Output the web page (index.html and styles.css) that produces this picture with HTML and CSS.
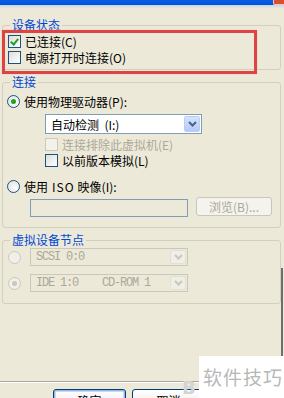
FILE: index.html
```html
<!DOCTYPE html>
<html lang="zh-CN">
<head>
    <meta charset="UTF-8">
    <meta name="viewport" content="width=device-width, initial-scale=1.0">
    <title>CD/DVD 设置</title>
    <link rel="stylesheet" href="styles.css">
</head>
<body>
    <div class="window">
        <div class="titlebar"><span class="close-btn"></span></div>

        <div class="content">
            <fieldset class="group group-status">
                <legend>设备状态</legend>
                <div class="row"><span class="check checked"></span>已连接(C)</div>
                <div class="row"><span class="check"></span>电源打开时连接(O)</div>
            </fieldset>

            <fieldset class="group group-conn">
                <legend>连接</legend>
                <div class="row"><span class="radio checked"></span>使用物理驱动器(P):</div>
                <div class="indent">
                    <div class="combo">
                        <span class="combo-text">自动检测&nbsp;&nbsp;(I:)</span>
                        <span class="combo-btn">
                            <svg width="9" height="6" viewBox="0 0 9 6"><path d="M1 1 L4.5 4.5 L8 1" fill="none" stroke="#4D6185" stroke-width="2"/></svg>
                        </span>
                    </div>
                    <div class="row row-e disabled"><span class="check"></span>连接排除此虚拟机(E)</div>
                    <div class="row"><span class="check"></span>以前版本模拟(L)</div>
                </div>
                <div class="row row-iso"><span class="radio"></span>使用<span class="lat">ISO</span>映像(I):</div>
                <div class="iso-line">
                    <div class="text-input"></div>
                    <div class="btn btn-disabled">浏览(B)...</div>
                </div>
            </fieldset>

            <fieldset class="group group-node">
                <legend>虚拟设备节点</legend>
                <div class="node-row">
                    <span class="radio disabled-radio"></span>
                    <div class="combo combo-disabled">
                        <span class="combo-text mono">SCSI 0:0</span>
                        <span class="combo-btn">
                            <svg width="9" height="6" viewBox="0 0 9 6"><path d="M1 1 L4.5 4.5 L8 1" fill="none" stroke="#C9C7BA" stroke-width="2"/></svg>
                        </span>
                    </div>
                </div>
                <div class="node-row">
                    <span class="radio disabled-radio checked"></span>
                    <div class="combo combo-disabled">
                        <span class="combo-text mono">IDE 1:0    CD-ROM 1</span>
                        <span class="combo-btn">
                            <svg width="9" height="6" viewBox="0 0 9 6"><path d="M1 1 L4.5 4.5 L8 1" fill="none" stroke="#C9C7BA" stroke-width="2"/></svg>
                        </span>
                    </div>
                </div>
            </fieldset>
        </div>

        <div class="footer">
            <div class="btn btn-default">确定</div>
            <div class="btn">取消</div>
        </div>

        <!-- annotation + watermark sit on top of the dialog -->
        <div class="highlight"></div>
        <div class="edge-line"></div>
        <div class="watermark"><span class="wm-logo">B</span><span class="wm-text">软件技巧</span></div>
    </div>
</body>
</html>
```

FILE: styles.css
```css
:root { --bg: #ECE9D8; --line: #D0D0BF; --legend: #0046D5; --disabled: #ACA899; --edge: #7F9DB9; }

* {
    box-sizing: border-box;
    margin: 0;
    padding: 0;
}

body {
    width: 284px;
    height: 398px;
    overflow: hidden;
    background: var(--bg);
    color: #000;
    font-family: "Noto Sans CJK SC", "DejaVu Sans", sans-serif;
    font-size: 12px;
    line-height: 15px;
}

.window {
    position: relative;
    height: 398px;
    display: flex;
    flex-direction: column;
}

.titlebar {
    height: 8px;
    background: linear-gradient(to bottom, #0A5FE6 0, #0550D8 5px, #C9D4EC 5px, #E8E6DA 8px);
    display: flex;
    justify-content: flex-end;
}

.close-btn {
    width: 11px;
    height: 5px;
    background: #D9502E;
    border-left: 1px solid #F3C8B8;
    border-bottom: 1px solid #F3C8B8;
    border-bottom-left-radius: 2px;
}

.content {
    padding: 0 3px 0 2px;
}

.group {
    border: 1px solid var(--line);
    border-radius: 3px;
    padding: 0 4px 0 4px;
}

.group legend {
    color: var(--legend);
    margin-left: 3px;
    padding: 0 2px;
    line-height: 14px;
}

.group-status {
    margin-top: 10px;
    padding-top: 1px;
    padding-bottom: 4px;
}

.group-status .row {
    padding-left: 1px;
}

.group-conn {
    margin-top: 5px;
    padding-top: 4px;
    padding-bottom: 10px;
}

.group-node {
    margin-top: 5px;
    padding-top: 1px;
    padding-bottom: 11px;
}

.row {
    display: flex;
    align-items: center;
    height: 16px;
    gap: 4px;
    white-space: nowrap;
}

.lat {
    margin-right: -1px;
    letter-spacing: 1px;
}

.disabled {
    color: var(--disabled);
}

.indent {
    margin-left: 38px;
}

.row-e {
    margin-top: 2px;
}

.row-iso {
    margin-top: 10px;
}

/* checkbox + radio, XP look */
.check {
    width: 13px;
    height: 13px;
    flex: none;
    border: 1px solid #1C5180;
    background: linear-gradient(135deg, #DCDCD7, #FFFFFF);
    position: relative;
}

.disabled .check {
    border-color: #CAC8BB;
    background: #F2F1EA;
}

.check.checked::after {
    content: "";
    position: absolute;
    left: 3px;
    top: 1px;
    width: 3px;
    height: 6px;
    border: solid #21A121;
    border-width: 0 2px 2px 0;
    transform: rotate(40deg);
}

.radio {
    width: 13px;
    height: 13px;
    flex: none;
    border-radius: 50%;
    border: 1px solid #1C5180;
    background: radial-gradient(circle at 65% 65%, #FFFFFF, #DCDCD7);
    position: relative;
}

.radio.checked::after {
    content: "";
    position: absolute;
    left: 3px;
    top: 3px;
    width: 5px;
    height: 5px;
    border-radius: 50%;
    background: #21A121;
}

.radio.disabled-radio {
    border-color: #CAC8BB;
    background: #F0EFE8;
}

.radio.disabled-radio.checked::after {
    background: #CAC8BB;
}

/* combo boxes */
.combo {
    width: 157px;
    height: 20px;
    margin-top: 5px;
    border: 1px solid var(--edge);
    background: #fff;
    display: flex;
    align-items: center;
    padding: 1px;
}

.combo-text {
    flex: 1;
    padding-left: 4px;
    white-space: pre;
}

.combo-text.mono {
    font-family: "Liberation Mono", "DejaVu Sans Mono", monospace;
    font-size: 12px;
    letter-spacing: -1.2px;
}

.combo-btn {
    width: 16px;
    height: 16px;
    display: flex;
    align-items: center;
    justify-content: center;
    border: 1px solid #B9CDF6;
    border-radius: 2px;
    background: linear-gradient(to bottom, #D6E3FC, #B4CAF6);
}

.combo-disabled {
    width: 158px;
    height: 18px;
    margin-top: 0;
    border-color: #CAC8BB;
    background: var(--bg);
    color: var(--disabled);
}

.combo-disabled .combo-btn {
    height: 14px;
    border-color: #E2E0D6;
    background: #EFEEE7;
}

.node-row {
    display: flex;
    align-items: center;
    gap: 9px;
    height: 18px;
    margin-top: 8px;
    padding-left: 1px;
}

.node-row:first-of-type {
    margin-top: 0;
}

.iso-line {
    display: flex;
    align-items: flex-start;
    gap: 8px;
    margin-top: 3px;
    margin-left: 23px;
}

.text-input {
    width: 158px;
    height: 18px;
    margin-top: 2px;
    border: 1px solid var(--edge);
    background: var(--bg);
}

/* buttons */
.btn {
    width: 73px;
    height: 23px;
    border: 1px solid #003C74;
    border-radius: 3px;
    background: linear-gradient(to bottom, #FFFFFF, #ECEBE6 80%, #D6D0C5);
    display: flex;
    align-items: center;
    justify-content: center;
    white-space: nowrap;
}

.btn-disabled {
    width: 76px;
    height: 19px;
    border-color: #C9C7BA;
    background: #F4F3EE;
    color: var(--disabled);
}

.btn-default {
    box-shadow: inset 0 0 0 1px #9CB7E8, inset 0 0 0 2px #C6D7F7;
}

.footer {
    margin-top: auto;
    height: 17px;
    border-top: 1px solid #ACA899;
    box-shadow: inset 0 1px 0 #FFFFFF;
    display: flex;
    gap: 6px;
    padding: 7px 0 0 53px;
    overflow: visible;
}

/* red annotation box */
.highlight {
    position: absolute;
    left: 2px;
    top: 30px;
    width: 255px;
    height: 44px;
    border: 3px solid #DD4444;
    box-shadow: 0 0 1px #F2A7A7;
}

.edge-line {
    position: absolute;
    left: 281px;
    top: 268px;
    width: 2px;
    height: 90px;
    background: #6E6E6E;
}

.watermark {
    position: absolute;
    left: 182px;
    top: 356px;
    width: 102px;
    height: 42px;
    display: flex;
    align-items: flex-end;
}

.wm-logo {
    width: 17px;
    height: 20px;
    color: #D4D4D4;
    font-family: "DejaVu Sans", sans-serif;
    font-weight: bold;
    font-size: 18px;
    line-height: 20px;
}

.wm-text {
    background: #fff;
    height: 42px;
    flex: 1;
    color: #B8B8B8;
    font-size: 19px;
    line-height: 42px;
    padding-left: 4px;
    letter-spacing: 1px;
}
```
